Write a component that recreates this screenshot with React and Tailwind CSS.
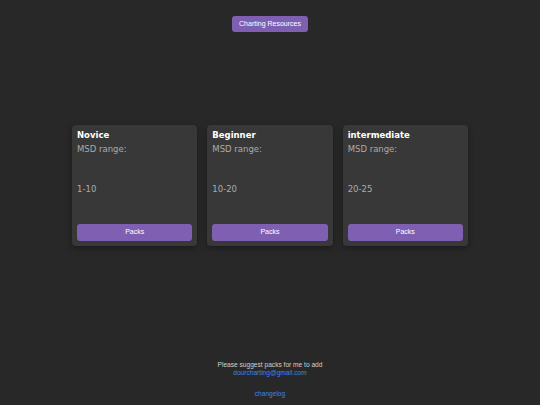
const levels = [
  { name: "Novice", range: "1-10" },
  { name: "Beginner", range: "10-20" },
  { name: "intermediate", range: "20-25" },
];

function LevelCard({ name, range }) {
  return (
    <div className="flex-1 h-[121px] bg-[#383838] rounded-[4px] shadow-[0_2px_6px_rgba(0,0,0,0.35)] px-[5px] pt-[5px] pb-[5px] flex flex-col">
      <h3 className="font-['DejaVu_Sans',sans-serif] font-bold text-[8.5px] leading-[10px] text-white">
        {name}
      </h3>
      <p className="font-['DejaVu_Sans',sans-serif] text-[8.5px] leading-[10px] text-[#ababab] mt-[4px]">
        MSD range:
      </p>
      <p className="font-['DejaVu_Sans',sans-serif] text-[8.5px] leading-[10px] text-[#ababab] mt-[30px]">
        {range}
      </p>
      <button className="mt-auto h-[17px] w-full rounded-[3px] bg-[#7e5fb2] text-white font-['Liberation_Sans',sans-serif] text-[7px]">
        Packs
      </button>
    </div>
  );
}

export default function App() {
  return (
    <div className="min-h-[405px] bg-[#282828] flex flex-col items-center pt-4">
      <button className="h-4 w-[76px] whitespace-nowrap rounded-[3px] bg-[#7e5fb2] text-white font-['Liberation_Sans',sans-serif] text-[7px]">
        Charting Resources
      </button>

      <div className="mt-[93px] w-[396px] flex gap-[10px]">
        {levels.map((l) => (
          <LevelCard key={l.name} {...l} />
        ))}
      </div>

      <div className="mt-[115px] flex flex-col items-center font-['Liberation_Sans',sans-serif] text-[6.6px] leading-[8px]">
        <p className="text-[#d0d0d0]">Please suggest packs for me to add</p>
        <a className="text-[#3b82f6]" href="#">
          dourcharting@gmail.com
        </a>
        <a className="text-[#3b82f6] mt-[13px]" href="#">
          changelog
        </a>
      </div>
    </div>
  );
}
